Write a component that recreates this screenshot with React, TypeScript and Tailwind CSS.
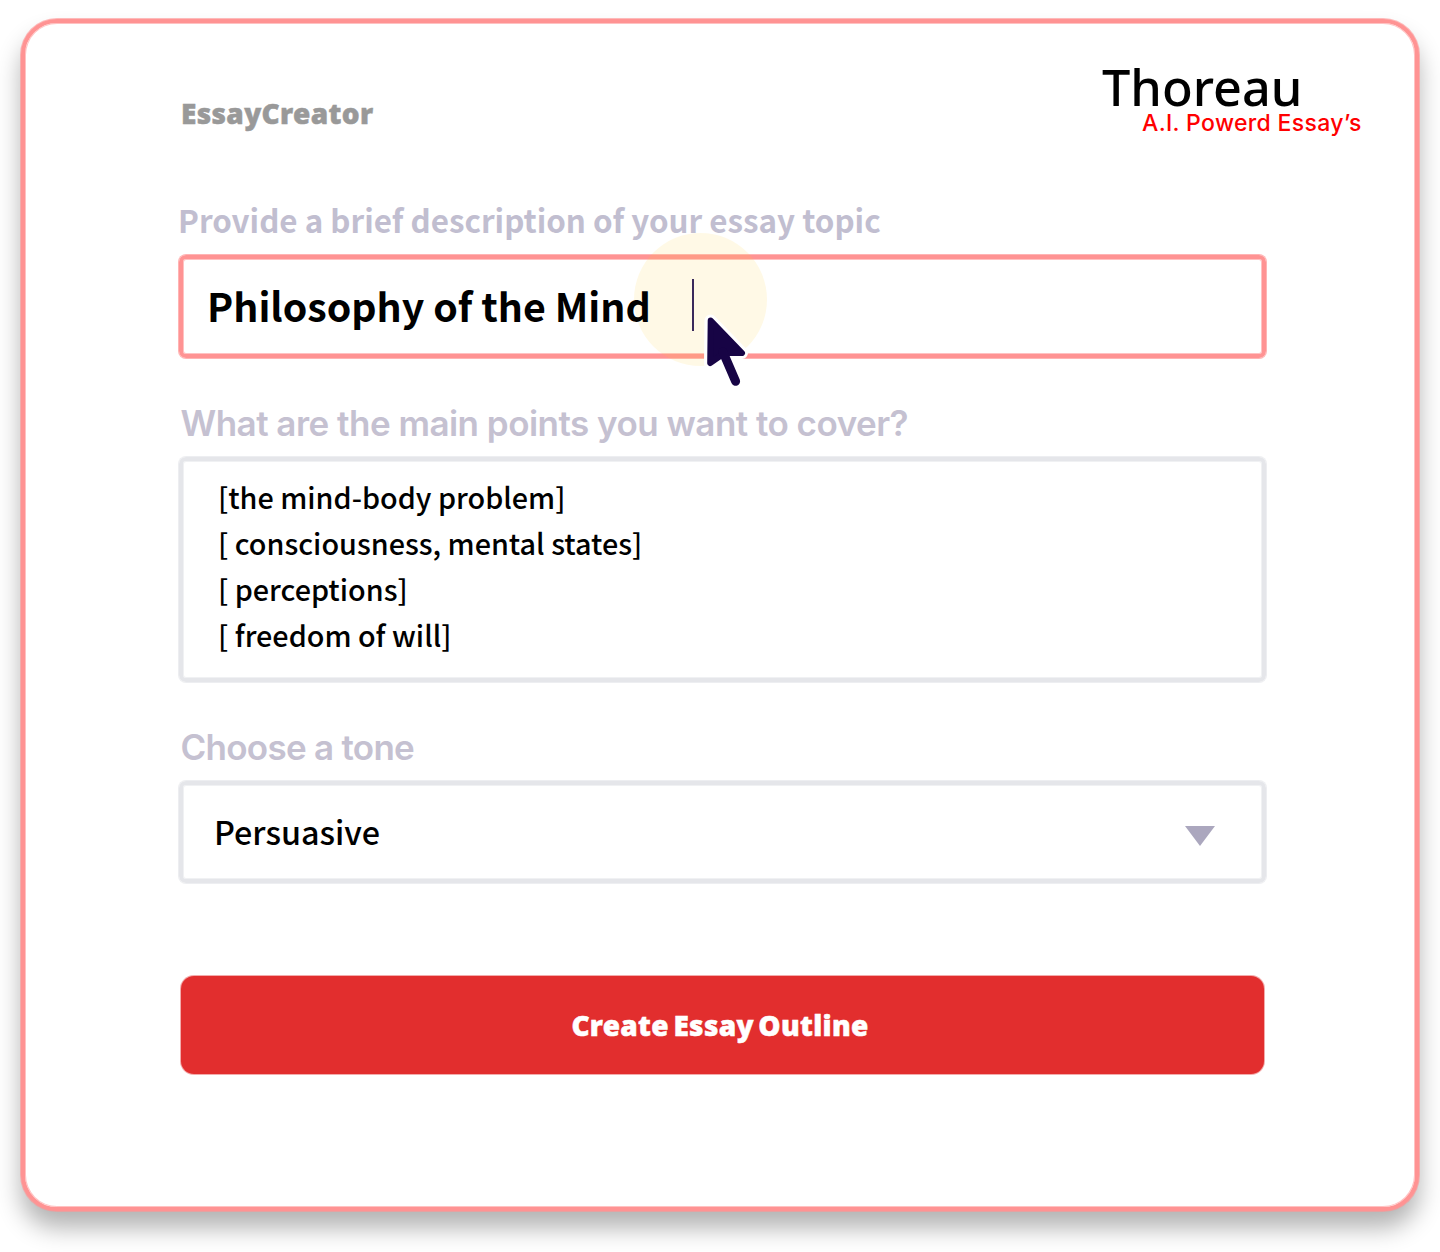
import type { ReactNode } from "react";

const points = [
  "[the mind-body problem]",
  "[ consciousness, mental states]",
  "[ perceptions]",
  "[ freedom of will]",
];

const source = "font-['Noto_Sans_CJK_SC','Noto_Sans',sans-serif]";

type FieldProps = {
  active?: boolean;
  className: string;
  children: ReactNode;
};

function Field({ active, className, children }: FieldProps) {
  const tone = active
    ? "border-[#ff9393] shadow-[0_0_0_1px_#ff9393b0,inset_0_0_0_1px_#ff939390]"
    : "border-[#e5e6ea] shadow-[0_0_0_1px_#e5e6eab0,inset_0_0_0_1px_#e5e6ea90]";

  return <div className={`relative w-[1087px] rounded-[7px] border-4 ${tone} ${className}`}>{children}</div>;
}

function Logo() {
  return (
    <div className="w-[259px] text-black">
      <p className="font-['Noto_Sans',sans-serif] text-[50.4px] font-medium leading-[48px]">Thoreau</p>
      <p className="ml-[40px] whitespace-nowrap font-['Inter',sans-serif] text-[23px] font-medium leading-6 tracking-[0.34px] text-[#ff0000]">
        A.I. Powerd Essay’s
      </p>
    </div>
  );
}

function Pointer() {
  return (
    <>
      <div className="absolute left-[451px] top-[-26px] size-[132.5px] rounded-full bg-[#ffca30]/12" />
      <div className="absolute left-[509px] top-[20px] h-[52px] w-[2px] bg-[#3a2a5c]" />
      <svg className="absolute left-[517px] top-[51px]" width="60" height="85" viewBox="700 310 60 85" fill="none">
        <path
          d="M710.5 320.5 L742 353 H729 L721.5 356 L710 363.5 Z"
          fill="#fff"
          stroke="#fff"
          strokeWidth="12"
          strokeLinejoin="round"
        />
        <path
          d="M710.7 320.5 L742 353 H726.5 L721 355.5 L710.2 363 Z"
          fill="#170445"
          stroke="#170445"
          strokeWidth="6"
          strokeLinejoin="round"
        />
        <path d="M723 352 L735.6 381.3" stroke="#170445" strokeWidth="9" strokeLinecap="round" />
      </svg>
    </>
  );
}

export default function App() {
  return (
    <main className="h-[1252px] w-[1440px] overflow-hidden bg-white pl-[21px] pt-[19px]">
      <section className="h-[1192px] w-[1398px] rounded-[36px] border-4 border-[#ff9393] bg-white shadow-[0_0_0_1px_#ff9393a0,inset_0_0_0_1px_#ff939390,0_17px_24px_rgba(0,0,0,0.3)]">
        <header className="flex h-[173px] justify-between pl-[156px] pr-[54px] pt-[40px]">
          <h1 className="mt-[30px] font-['Noto_Sans',sans-serif] text-[28px] font-black leading-10 tracking-[0.35px] text-[#999999] [-webkit-text-stroke:0.5px_#999999]">
            EssayCreator
          </h1>
          <Logo />
        </header>

        <form className="flex flex-col pl-[154px]">
          <label className={`${source} -ml-px h-[59px] text-[31.35px] font-bold leading-[48px] text-[#c1bed0]`}>
            Provide a brief description of your essay topic
          </label>
          <Field active className="flex h-[103px] items-center pl-[24px]">
            <span
              className={`${source} relative z-10 -mt-[4px] whitespace-pre text-[39.35px] font-bold leading-none text-black`}
            >
              Philosophy of the Mind
            </span>
            <Pointer />
          </Field>

          <label className="mt-[41px] h-[58px] pl-[1.5px] font-['Inter',sans-serif] text-[35px] font-semibold leading-[48px] tracking-[-0.51px] text-[#c5c1d1]">
            What are the main points you want to cover?
          </label>
          <Field className="h-[225px] pl-[35px] pt-[13px]">
            <ul className={`${source} text-[28.75px] font-medium leading-[46px] text-black`}>
              {points.map((point) => (
                <li key={point}>{point}</li>
              ))}
            </ul>
          </Field>

          <label className="mt-[41px] h-[58px] pl-[1.5px] font-['Inter',sans-serif] text-[35px] font-semibold leading-[48px] tracking-[-0.72px] text-[#c5c1d1]">
            Choose a tone
          </label>
          <Field className="flex h-[102px] items-center justify-between pl-[31px] pr-[47px]">
            <span className={`${source} -mt-px text-[32.3px] font-medium leading-none text-black`}>Persuasive</span>
            <svg className="mt-[8px]" width="30" height="20" viewBox="0 0 30 20">
              <path d="M0 0H30L15 20Z" fill="#aba7be" />
            </svg>
          </Field>

          <button
            type="button"
            className="ml-[2px] mt-[93px] h-[98px] w-[1083px] rounded-[13px] bg-[#e22e2e] pr-[5px] font-['Noto_Sans',sans-serif] text-[28px] font-black tracking-[0.3px] text-white shadow-[0_0_0_1px_#e22e2e66] [-webkit-text-stroke:0.5px_white] [word-spacing:-3px]"
          >
            Create Essay Outline
          </button>
        </form>
      </section>
    </main>
  );
}
